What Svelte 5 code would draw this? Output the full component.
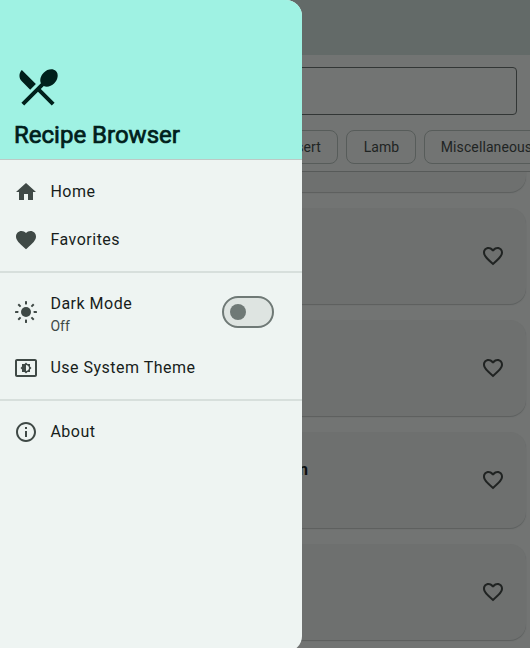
<script>
  const recipes = ['', '', '', 'n', ''];
  const chips = [
    { label: 'Dessert', width: 84 },
    { label: 'Lamb', width: 70 },
    { label: 'Miscellaneous', width: 124 }
  ];
  const rays = [0, 45, 90, 135, 180, 225, 270, 315];
</script>

<div class="app">
  <div class="page">
    <div class="topbar"></div>
    <div class="filters">
      <div class="search"></div>
      <div class="chips">
        {#each chips as chip}
          <div class="chip" style="width: {chip.width}px">{chip.label}</div>
        {/each}
      </div>
    </div>
    <div class="list">
      {#each recipes as title}
        <div class="card">
          <span class="title">{title}</span>
          <svg class="heart" viewBox="0 0 24 24"><path d="M16.5 3c-1.74 0-3.41.81-4.5 2.09C10.91 3.81 9.24 3 7.5 3 4.42 3 2 5.42 2 8.5c0 3.78 3.4 6.86 8.55 11.54L12 21.35l1.45-1.32C18.6 15.36 22 12.28 22 8.5 22 5.42 19.58 3 16.5 3zm-4.4 15.55l-.1.1-.1-.1C7.14 14.24 4 11.39 4 8.5 4 6.5 5.5 5 7.5 5c1.54 0 3.04.99 3.57 2.36h1.87C13.46 5.99 14.96 5 16.5 5c2 0 3.5 1.5 3.5 3.5 0 2.89-3.14 5.74-7.9 10.05z" /></svg>
        </div>
      {/each}
    </div>
  </div>

  <aside class="drawer">
    <header>
      <svg class="logo" viewBox="0 0 24 24"><path d="M8.1 13.34l2.83-2.83L3.91 3.5c-1.56 1.56-1.56 4.09 0 5.66l4.19 4.18zm6.78-1.81c1.53.71 3.68.21 5.27-1.38 1.91-1.91 2.28-4.65.81-6.12-1.46-1.46-4.2-1.1-6.12.81-1.59 1.59-2.09 3.74-1.38 5.27L3.7 19.87l1.41 1.41L12 14.41l6.88 6.88 1.41-1.41L13.41 13l1.47-1.47z" /></svg>
      <h1>Recipe Browser</h1>
    </header>
    <nav>
      <div class="row">
        <svg viewBox="0 0 24 24"><path d="M10 20v-6h4v6h5v-8h3L12 3 2 12h3v8z" /></svg>
        <span>Home</span>
      </div>
      <div class="row">
        <svg viewBox="0 0 24 24"><path d="M12 21.35l-1.45-1.32C5.4 15.36 2 12.28 2 8.5 2 5.42 4.42 3 7.5 3c1.74 0 3.41.81 4.5 2.09C13.09 3.81 14.76 3 16.5 3 19.58 3 22 5.42 22 8.5c0 3.78-3.4 6.86-8.55 11.54L12 21.35z" /></svg>
        <span>Favorites</span>
      </div>
      <div class="divider"></div>
      <div class="row tall">
        <svg viewBox="0 0 24 24">
          <circle cx="12" cy="12" r="5" />
          {#each rays as angle}
            <rect x="11" y="1" width="2" height="3.4" rx=".4" transform="rotate({angle} 12 12)" />
          {/each}
        </svg>
        <div class="label">
          <span>Dark Mode</span>
          <small>Off</small>
        </div>
        <div class="switch"><i></i></div>
      </div>
      <div class="row">
        <svg viewBox="0 0 24 24"><path d="M21 3H3c-1.1 0-2 .9-2 2v14c0 1.1.9 2 2 2h18c1.1 0 2-.9 2-2V5c0-1.1-.9-2-2-2zm0 16.01H3V4.99h18v14.02zM8 16h2.5l1.5 1.5 1.5-1.5H16v-2.5l1.5-1.5-1.5-1.5V8h-2.5L12 6.5 10.5 8H8v2.5L6.5 12 8 13.5V16zm4-7c1.66 0 3 1.34 3 3s-1.34 3-3 3V9z" /></svg>
        <span>Use System Theme</span>
      </div>
      <div class="divider"></div>
      <div class="row">
        <svg viewBox="0 0 24 24"><path d="M11 7h2v2h-2zm0 4h2v6h-2zm1-9C6.48 2 2 6.48 2 12s4.48 10 10 10 10-4.48 10-10S17.52 2 12 2zm0 18c-4.41 0-8-3.59-8-8s3.59-8 8-8 8 3.59 8 8-3.59 8-8 8z" /></svg>
        <span>About</span>
      </div>
    </nav>
  </aside>
</div>

<style>
  .app {
    position: relative;
    width: 530px;
    height: 648px;
    overflow: hidden;
    font-family: Roboto, sans-serif;
    background: #727473;
  }
  .app * { box-sizing: border-box; }
  svg { display: block; flex: none; fill: currentColor; width: 24px; height: 24px; }
  .topbar { height: 55px; background: #636a68; }
  .filters {
    height: 117px;
    padding-top: 12px;
    border-bottom: 1px solid #575a59;
    overflow: hidden;
  }
  .search {
    height: 48px;
    margin: 0 13px 0 12px;
    border: 1px solid #323635;
    border-radius: 4px;
  }
  .chips { display: flex; gap: 8px; margin-top: 15px; padding-left: 254px; }
  .chip {
    flex: none;
    height: 34px;
    display: flex;
    align-items: center;
    justify-content: center;
    padding-left: 1px;
    border: 1px solid #575c5a;
    border-radius: 8px;
    font-size: 14px;
    letter-spacing: 0.1px;
    color: #1f2423;
    white-space: nowrap;
  }
  .list {
    height: 476px;
    overflow: hidden;
    padding: 0 4px 0 12px;
  }
  .card {
    display: flex;
    align-items: center;
    justify-content: space-between;
    height: 96px;
    margin-bottom: 16px;
    padding: 0 21px 0 287px;
    border-radius: 16px;
    background: #6e706f;
    box-shadow: 0 1px 1px #5c5f5e;
  }
  .card:first-child { margin-top: -76px; }
  .title { color: #0c0f0e; font-size: 16px; font-weight: 700; line-height: 20px; margin-bottom: 20px; }
  .heart { color: #202322; }

  .drawer {
    position: absolute;
    left: 0;
    top: 0;
    width: 302px;
    height: 652px;
    overflow: hidden;
    border-radius: 0 16px 16px 0;
    background: #eef4f2;
    color: #171d1b;
  }
  header {
    height: 160px;
    padding: 63px 14px 0;
    background: #9ff2e3;
    border-bottom: 1px solid #bec9c5;
    color: #00201b;
  }
  .logo { width: 48px; height: 48px; }
  h1 {
    margin: 8px 0 0;
    font-size: 24px;
    line-height: 32px;
    font-weight: 400;
    -webkit-text-stroke: 0.7px currentColor;
    white-space: nowrap;
  }
  nav { padding-top: 8px; }
  .row {
    display: flex;
    align-items: center;
    height: 48px;
    padding: 0 28px 0 14px;
    gap: 12.4px;
    font-size: 16px;
    line-height: 24px;
    letter-spacing: 0.5px;
  }
  .row.tall { height: 64px; }
  .row svg { color: #3f4946; }
  .label { display: flex; flex-direction: column; padding-top: 4px; }
  small { font-size: 14px; line-height: 20px; letter-spacing: 0.1px; color: #3f4946; }
  .divider { height: 16px; padding: 7px 0; }
  .divider::before { content: ''; display: block; height: 2px; background: #d7dfdc; }
  .switch {
    display: flex;
    align-items: center;
    width: 52px;
    height: 32px;
    margin-left: auto;
    padding-left: 6px;
    border: 2px solid #6f7976;
    border-radius: 16px;
    background: #dee4e1;
  }
  .switch i { width: 16px; height: 16px; border-radius: 50%; background: #6f7976; }
</style>
